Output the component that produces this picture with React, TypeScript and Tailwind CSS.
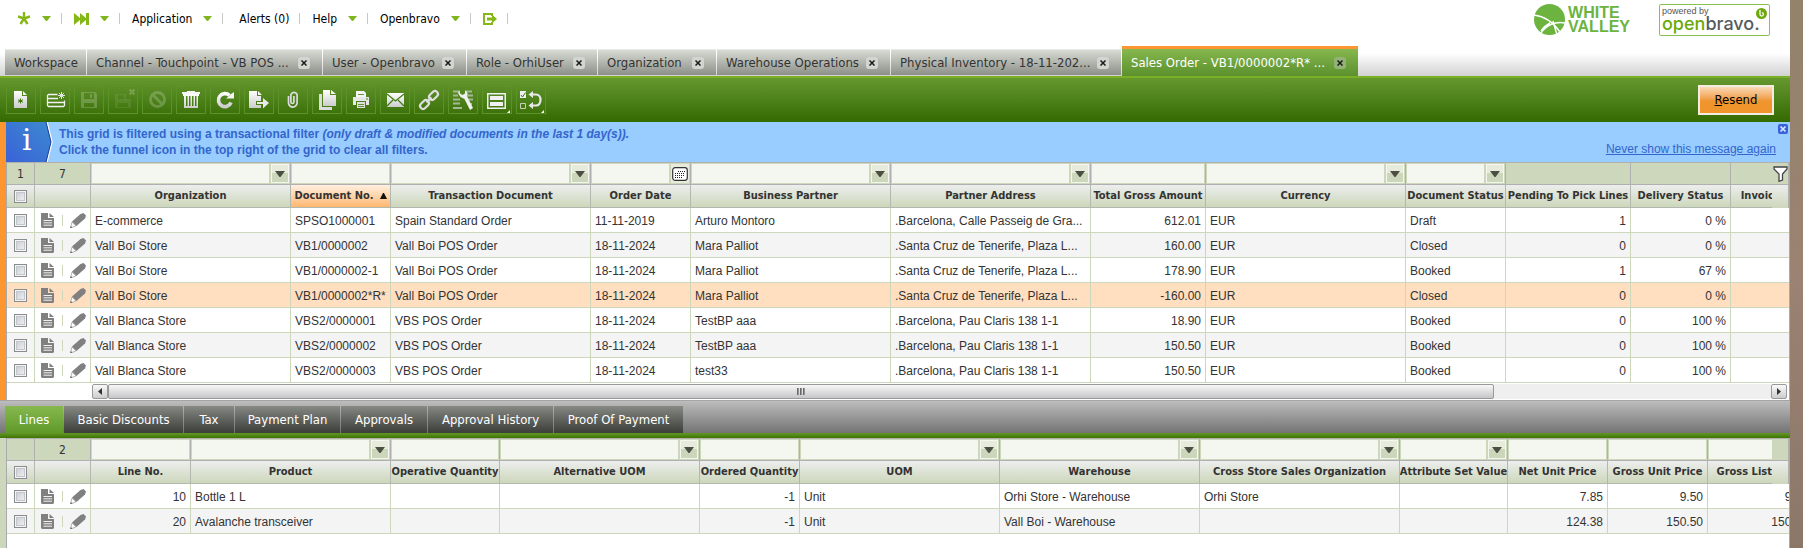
import React, { useState } from 'react';

interface Column {
  label: string;
  width: string;
  filter: 'text' | 'combo' | 'date' | 'none';
  align?: 'right';
  sorted?: boolean;
}

const menuFont = 'font-["DejaVu_Sans_Condensed","DejaVu_Sans",sans-serif]';

const openTabs = [
  { label: 'Workspace', width: 'w-[81px]' },
  { label: 'Channel - Touchpoint - VB POS ...', width: 'w-[235px]' },
  { label: 'User - Openbravo', width: 'w-[143px]' },
  { label: 'Role - OrhiUser', width: 'w-[130px]' },
  { label: 'Organization', width: 'w-[118px]' },
  { label: 'Warehouse Operations', width: 'w-[173px]' },
  { label: 'Physical Inventory - 18-11-202...', width: 'w-[230px]' },
  { label: 'Sales Order - VB1/0000002*R* ...', width: 'w-[236px]' },
];

const childTabs = [
  { label: 'Lines', width: 'w-[58px]' },
  { label: 'Basic Discounts', width: 'w-[119px]' },
  { label: 'Tax', width: 'w-[50px]' },
  { label: 'Payment Plan', width: 'w-[105px]' },
  { label: 'Approvals', width: 'w-[86px]' },
  { label: 'Approval History', width: 'w-[125px]' },
  { label: 'Proof Of Payment', width: 'w-[129px]' },
];

const orderColumns: Column[] = [
  { label: 'Organization', width: 'w-[200px]', filter: 'combo' },
  { label: 'Document No.', width: 'w-[100px]', filter: 'text', sorted: true },
  { label: 'Transaction Document', width: 'w-[200px]', filter: 'combo' },
  { label: 'Order Date', width: 'w-[100px]', filter: 'date' },
  { label: 'Business Partner', width: 'w-[200px]', filter: 'combo' },
  { label: 'Partner Address', width: 'w-[200px]', filter: 'combo' },
  { label: 'Total Gross Amount', width: 'w-[115px]', filter: 'text', align: 'right' },
  { label: 'Currency', width: 'w-[200px]', filter: 'combo' },
  { label: 'Document Status', width: 'w-[100px]', filter: 'combo' },
  { label: 'Pending To Pick Lines', width: 'w-[125px]', filter: 'none', align: 'right' },
  { label: 'Delivery Status', width: 'w-[100px]', filter: 'none', align: 'right' },
  { label: 'Invoice Status', width: 'w-[100px]', filter: 'none', align: 'right' },
];

const orderRows = [
  ['E-commerce', 'SPSO1000001', 'Spain Standard Order', '11-11-2019', 'Arturo Montoro', '.Barcelona, Calle Passeig de Gra...', '612.01', 'EUR', 'Draft', '1', '0 %', ''],
  ['Vall Boí Store', 'VB1/0000002', 'Vall Boi POS Order', '18-11-2024', 'Mara Palliot', '.Santa Cruz de Tenerife, Plaza L...', '160.00', 'EUR', 'Closed', '0', '0 %', ''],
  ['Vall Boí Store', 'VB1/0000002-1', 'Vall Boi POS Order', '18-11-2024', 'Mara Palliot', '.Santa Cruz de Tenerife, Plaza L...', '178.90', 'EUR', 'Booked', '1', '67 %', ''],
  ['Vall Boí Store', 'VB1/0000002*R*', 'Vall Boi POS Order', '18-11-2024', 'Mara Palliot', '.Santa Cruz de Tenerife, Plaza L...', '-160.00', 'EUR', 'Closed', '0', '0 %', ''],
  ['Vall Blanca Store', 'VBS2/0000001', 'VBS POS Order', '18-11-2024', 'TestBP aaa', '.Barcelona, Pau Claris 138 1-1', '18.90', 'EUR', 'Booked', '0', '100 %', ''],
  ['Vall Blanca Store', 'VBS2/0000002', 'VBS POS Order', '18-11-2024', 'TestBP aaa', '.Barcelona, Pau Claris 138 1-1', '150.50', 'EUR', 'Booked', '0', '100 %', ''],
  ['Vall Blanca Store', 'VBS2/0000003', 'VBS POS Order', '18-11-2024', 'test33', '.Barcelona, Pau Claris 138 1-1', '150.50', 'EUR', 'Booked', '0', '100 %', ''],
];

const lineColumns: Column[] = [
  { label: 'Line No.', width: 'w-[100px]', filter: 'text', align: 'right' },
  { label: 'Product', width: 'w-[200px]', filter: 'combo' },
  { label: 'Operative Quantity', width: 'w-[109px]', filter: 'text', align: 'right' },
  { label: 'Alternative UOM', width: 'w-[200px]', filter: 'combo' },
  { label: 'Ordered Quantity', width: 'w-[100px]', filter: 'text', align: 'right' },
  { label: 'UOM', width: 'w-[200px]', filter: 'combo' },
  { label: 'Warehouse', width: 'w-[200px]', filter: 'combo' },
  { label: 'Cross Store Sales Organization', width: 'w-[200px]', filter: 'combo' },
  { label: 'Attribute Set Value', width: 'w-[108px]', filter: 'combo' },
  { label: 'Net Unit Price', width: 'w-[100px]', filter: 'text', align: 'right' },
  { label: 'Gross Unit Price', width: 'w-[100px]', filter: 'text', align: 'right' },
  { label: 'Gross List Price', width: 'w-[105px]', filter: 'text', align: 'right' },
];

const lineRows = [
  ['10', 'Bottle 1 L', '', '', '-1', 'Unit', 'Orhi Store - Warehouse', 'Orhi Store', '', '7.85', '9.50', '9.50'],
  ['20', 'Avalanche transceiver', '', '', '-1', 'Unit', 'Vall Boi - Warehouse', '', '', '124.38', '150.50', '150.50'],
];

const docPath = 'M8 5h8v5h5v12H8z M17 5l4 4h-4z';

// Toolbar drawings, all on a 30x28 canvas
const toolbarItems: { name: string; disabled?: boolean; menu?: boolean; icon: React.ReactNode }[] = [
  {
    name: 'New in form',
    icon: (
      <>
        <path d={docPath} fill="url(#tool)" />
        <path d="M14.500 12.500v5M12 13.700l5 2.600M12 16.300l5-2.600" stroke="#3f7a10" strokeWidth="1" />
      </>
    ),
  },
  {
    name: 'New in grid',
    icon: (
      <>
        <path d="M17.500 8.500H8.500l-1 1v10l1 1h15l1-1v-5M8 12.500h10M8 16.500h16" fill="none" stroke="#f2f2f2" strokeWidth="1.300" />
        <path d="M21.500 6v7M18 9.500h7M19 7l5 5M24 7l-5 5" stroke="#e4e4e4" strokeWidth="1" />
      </>
    ),
  },
  {
    name: 'Save',
    disabled: true,
    icon: <path fillRule="evenodd" d="M7 6h14l2 2v14H7zM10 7v6h10V7zM16 8h2v4h-2zM10 17h10v4H10z" fill="#ffffff" />,
  },
  {
    name: 'Save and close',
    disabled: true,
    icon: (
      <>
        <path fillRule="evenodd" d="M7 8h11v5h5v9H7zM10 9v4h6V9zM10 17h10v4H10z" fill="#ffffff" opacity="0.400" />
        <path d="M21.500 3.500l5 5M26.500 3.500l-5 5" stroke="#ffffff" strokeWidth="2.200" />
      </>
    ),
  },
  {
    name: 'Undo changes',
    disabled: true,
    icon: (
      <>
        <circle cx="15.500" cy="13.500" r="7" fill="none" stroke="#ffffff" strokeWidth="3" />
        <path d="M10.500 8.500l10 10" stroke="#ffffff" strokeWidth="3" />
      </>
    ),
  },
  {
    name: 'Delete',
    icon: (
      <>
        <path d="M6 6h5V5h8v1h5v2H6z" fill="#f5f5f5" />
        <path fillRule="evenodd" d="M7 8h16v2h-1v12H8V10H7zM10 10h1.500v10H10zM13 10h1.500v10H13zM16 10h1.500v10H16zM19 10h1.500v10H19z" fill="url(#tool)" />
      </>
    ),
  },
  {
    name: 'Refresh',
    icon: (
      <>
        <path d="M21 16.500A6.500 6.500 0 1 1 19.500 9.500" fill="none" stroke="url(#tool)" strokeWidth="3.600" />
        <path d="M16 12.500l2.500-2L21 8l3-2v6.500z" fill="#f5f5f5" />
      </>
    ),
  },
  {
    name: 'Export to spreadsheet',
    icon: (
      <>
        <path d="M5 5h8v5h4v5h-5v4h5v3H5zM14 5l4 4h-4z" fill="url(#tool)" />
        <path d="M13 16h6v-4l6 5-6 5.500V18h-6z" fill="#e9e9e9" />
      </>
    ),
  },
  {
    name: 'Attachments',
    icon: (
      <path d="M10.500 10v6.500a4.300 4.300 0 0 0 8.600 .5V8.500a3.300 3.300 0 0 0-6.200 0v7.500a1.500 1.500 0 0 0 3 0V10" fill="none" stroke="#dddddd" strokeWidth="1.700" />
    ),
  },
  {
    name: 'Clone record',
    icon: (
      <>
        <path d="M7 8h3v13h10v3H7z" fill="#dcdcdc" />
        <path d="M11 4h7v5h6v11H11zM19 4l5 4h-5z" fill="url(#tool)" />
      </>
    ),
  },
  {
    name: 'Print',
    icon: (
      <>
        <path d="M10 5h8l2 2v4h-10z" fill="#f5f5f5" />
        <path fillRule="evenodd" d="M7 11h16v8h-3v-4H10v4H7zM20 12.500h2v1h-2z" fill="#e6e6e6" />
        <path d="M11 16h8v6h-8z" fill="#e0e0e0" />
        <path d="M12 18.500h6M12 20.500h6M12 8.500h6" stroke="#3f7a10" strokeWidth="0.800" />
      </>
    ),
  },
  {
    name: 'Send email',
    icon: (
      <>
        <path d="M7 7h17v14H7z" fill="url(#tool)" />
        <path d="M7 8l8.500 7L24 8M7 20l6-6M24 20l-6-6" fill="none" stroke="#3f7a10" strokeWidth="1.200" />
      </>
    ),
  },
  {
    name: 'Copy link',
    icon: (
      <g fill="none" stroke="#dedede" strokeWidth="2.200">
        <rect x="-5" y="-3" width="10" height="6" rx="3" transform="translate(19.500 9.500) rotate(-45)" />
        <rect x="-5" y="-3" width="10" height="6" rx="3" transform="translate(10.500 18.500) rotate(-45)" />
        <path d="M12.500 16.500l5-5" />
      </g>
    ),
  },
  {
    name: 'Linked items',
    icon: (
      <>
        <path d="M5 5.500h6M5 9.500h5M18 5.500h6M5 13.500h7M5 17.500h7M5 22h9M20 9.500h5M20 18h4M20 13.500h5" stroke="#a5b894" strokeWidth="1.800" />
        <path d="M11.500 4l.5 3.500 2.500 1.500L17 7.500V4l2.500 3v4L25 22l-3 2-5.500-11-4-2-2.500-4z" fill="#efefef" />
      </>
    ),
  },
  {
    name: 'Form layout',
    menu: true,
    icon: <path fillRule="evenodd" d="M5 7h19v16H5zM6.500 8.500v13h16v-13zM8 10h13v4H8zM8 16h13v4H8z" fill="#f0f0f0" />,
  },
  {
    name: 'Process',
    menu: true,
    icon: (
      <>
        <path d="M4 5h6v7H4z" fill="#f0f0f0" />
        <path d="M5 9l1.500 2L9.500 6.500" fill="none" stroke="#3f7a10" />
        <path d="M4.500 17.500h5v5h-5z" fill="none" stroke="#c5d0ba" />
        <path d="M16 8.500h4c6 0 6 11 0 11h-4" fill="none" stroke="#e8e8e8" strokeWidth="2.200" />
        <path d="M12.500 8.500l4.500-3.500v7zM12.500 19.500l4.500-3.500v7z" fill="#e8e8e8" />
      </>
    ),
  },
];

const Caret: React.FC = () => (
  <svg className="h-[5px] w-[9px]" viewBox="0 0 9 5">
    <path d="M0 0h9L5 5H4z" fill="#7fb41c" />
  </svg>
);

const Separator: React.FC = () => <span className="h-[11px] w-px bg-[#c8c8c8]" />;

const MenuItem: React.FC<{ label: string; caret?: boolean; children: React.ReactNode }> = ({ label, caret, children }) => (
  <>
    <button type="button" aria-label={label} className="flex items-center gap-[11px] pr-[10px] pl-3">
      {children}
      {caret && <Caret />}
    </button>
    <Separator />
  </>
);

const CloseButton: React.FC<{ label: string; active?: boolean }> = ({ label, active }) => (
  <button
    type="button"
    aria-label={`Close ${label}`}
    className={`flex h-3 w-3 shrink-0 items-center justify-center rounded-[3px] ${active ? 'bg-[#93b376]' : 'bg-[#d3d5d0]'}`}
  >
    <svg className="h-[6px] w-[6px]" viewBox="0 0 6 6">
      <path d="M.5 .5l5 5M5.500 .5l-5 5" stroke="#1a1a1a" strokeWidth="1.500" />
    </svg>
  </button>
);

const Checkbox: React.FC<{ label: string }> = ({ label }) => (
  <input
    type="checkbox"
    aria-label={label}
    className="block h-[13px] w-[13px] appearance-none border border-[#8a8d90] bg-linear-to-br from-[#c4c8d0] to-[#f6f6f6] shadow-[inset_0_0_0_1px_#f4f4f4,inset_0_0_0_2px_#c3c6ca] checked:bg-[#7fb41c]"
  />
);

const FilterCell: React.FC<{ column: Column }> = ({ column }) => {
  if (column.filter === 'none') {
    return null;
  }
  return (
    <div className="flex h-full gap-[2px] p-px">
      <input type="text" aria-label={`Filter ${column.label}`} className="h-full w-0 min-w-0 flex-1 bg-[#f4f7ef] px-1 outline-none" />
      {column.filter === 'combo' && (
        <button
          type="button"
          aria-label={`Pick ${column.label}`}
          className="flex w-[18px] items-center justify-center border border-[#f4f7ef] bg-linear-to-b from-[#e6ebdc] from-50% to-[#ccd6ba] to-50%"
        >
          <svg className="h-[6px] w-[10px]" viewBox="0 0 10 6">
            <path d="M0 0h10L5.500 6h-1z" fill="#4a4f42" />
          </svg>
        </button>
      )}
      {column.filter === 'date' && (
        <button type="button" aria-label={`Pick ${column.label}`} className="flex w-[18px] items-center justify-center bg-[#e6ebdc]">
          <svg className="h-[14px] w-4" viewBox="0 0 16 14">
            <rect x=".7" y=".7" width="14.600" height="12.600" rx="2.500" fill="#ffffff" stroke="#333333" strokeWidth="1.200" />
            <path d="M6 4.500h7M3 6.500h10M3 8.500h10M3 10.500h8" stroke="#222222" strokeDasharray="1 1" />
          </svg>
        </button>
      )}
    </div>
  );
};

interface GridProps {
  columns: Column[];
  rows: string[][];
  selected?: number;
  counter?: string;
  funnel?: boolean;
  minWidth: string;
}

const Grid: React.FC<GridProps> = ({ columns, rows, selected, counter, funnel, minWidth }) => {
  const [current, setCurrent] = useState<number | undefined>(selected);

  return (
    <div className="relative overflow-hidden">
      <table className={`table-fixed border-separate border-spacing-0 font-["Liberation_Sans",Arial,sans-serif] text-xs text-[#333333] ${minWidth}`}>
        <colgroup>
          <col className="w-[28px]" />
          <col className="w-[56px]" />
          {columns.map((column) => (
            <col key={column.label} className={column.width} />
          ))}
        </colgroup>
        <thead>
          <tr className="bg-[#cdd7bb]">
            <td className={`h-[23px] border-t border-r border-b border-[#b0b0b0] p-0 pt-px text-center ${menuFont}`}>{counter}</td>
            <td className={`border-t border-r border-b border-[#b0b0b0] p-0 pt-px text-center ${menuFont}`}>{rows.length}</td>
            {columns.map((column) => (
              <td key={column.label} className="h-[23px] border-t border-r border-b border-[#b0b0b0] p-0">
                <FilterCell column={column} />
              </td>
            ))}
          </tr>
          <tr>
            <td className="h-[23px] border-r border-b border-[#b0b8b0] bg-linear-to-b from-[#eceeed] to-[#cdd7bb] p-0 pl-[7px]">
              <Checkbox label="Select all" />
            </td>
            <td className="border-r border-b border-[#b0b8b0] bg-linear-to-b from-[#eceeed] to-[#cdd7bb] p-0" />
            {columns.map((column) => (
              <th
                key={column.label}
                scope="col"
                className={`h-[23px] overflow-hidden border-r border-b border-[#b0b8b0] bg-linear-to-b p-0 text-center text-[11px] font-bold whitespace-nowrap ${menuFont} ${
                  column.sorted ? 'from-[#ffefe0] to-[#ffb76e]' : 'from-[#eceeed] to-[#cdd7bb]'
                }`}
              >
                <div className="flex items-center justify-center gap-[6px]">
                  {column.label}
                  {column.sorted && (
                    <svg className="h-[6px] w-[7px]" viewBox="0 0 7 6">
                      <path d="M0 6L3 0h1l3 6z" fill="#111111" />
                    </svg>
                  )}
                </div>
              </th>
            ))}
          </tr>
        </thead>
        <tbody>
          {rows.map((row, index) => (
            <tr
              key={index}
              onClick={() => setCurrent(index)}
              className={current === index ? 'bg-[#ffdfbf]' : index % 2 ? 'bg-[#f4f4f4]' : 'bg-white'}
            >
              <td className="h-[25px] border-r border-b border-[#cdd7bb] p-0 pt-px pl-[7px]">
                <Checkbox label={`Select row ${index + 1}`} />
              </td>
              <td className="border-r border-b border-[#cdd7bb] p-0 pt-px">
                <div className="flex items-center justify-between pr-1 pl-[6px]">
                  <button type="button" aria-label="Open in form">
                    <svg className="h-[15px] w-[13px]" viewBox="0 0 13 15">
                      <path d="M0 0h7v5h6v9l-1 1H1l-1-1zM8.500 0L13 4H8.500z" fill="#808080" />
                      <path d="M2.500 7.500h8.500M2.500 9.800h8.500M2.500 12.200h8.500" stroke="#f0f0f0" strokeWidth="1" />
                    </svg>
                  </button>
                  <span className="h-[11px] w-px bg-[#cdd7bb]" />
                  <button type="button" aria-label="Edit in grid">
                    <svg className="h-[15px] w-4" viewBox="0 0 16 15">
                      <path d="M2 8.500L10.500 1l3-1L16 2.500l-1 3L6.500 13z" fill="#808080" />
                      <path d="M2 9l4 4-5.500 2z" fill="#fafafa" stroke="#9a9a9a" strokeWidth="0.700" />
                      <path d="M.8 13l1.500 1.500L.3 15z" fill="#555555" />
                    </svg>
                  </button>
                </div>
              </td>
              {row.map((value, i) => (
                <td
                  key={i}
                  className={`overflow-hidden border-r border-b border-[#cdd7bb] px-1 pt-px pb-0 whitespace-nowrap ${
                    columns[i].align === 'right' ? 'text-right' : ''
                  }`}
                >
                  {value}
                </td>
              ))}
            </tr>
          ))}
        </tbody>
      </table>
      {/* Corner over the header, above the vertical scroll area */}
      <div className="absolute top-0 right-0 flex h-[46px] w-[17px] flex-col border-t border-r border-[#b0b0b0]">
        <div className="flex h-[22px] items-center justify-center border-b border-[#b0b0b0] bg-[#cdd7bb]">
          {funnel && (
            <button type="button" aria-label="Clear filters">
              <svg className="h-4 w-[15px]" viewBox="0 0 15 16">
                <path d="M1 1h13v2L9.500 8v6l-3.500 1.300V8L1 3z" fill="#ffffff" stroke="#444444" strokeWidth="1.300" />
              </svg>
            </button>
          )}
        </div>
        <div className="flex-1 bg-linear-to-b from-[#eceeed] to-[#cdd7bb]" />
      </div>
    </div>
  );
};

const App: React.FC = () => {
  const [activeChild, setActiveChild] = useState('Lines');
  const [showMessage, setShowMessage] = useState(true);

  return (
    <div className="flex min-h-screen bg-linear-to-b from-[#92836a] via-[#9b8272] to-[#8b7768]">
      <svg className="absolute h-0 w-0" aria-hidden="true">
        <defs>
          <linearGradient id="tool" x1="0" y1="0" x2="0" y2="1">
            <stop offset="0" stopColor="#ffffff" />
            <stop offset="1" stopColor="#cccccc" />
          </linearGradient>
        </defs>
      </svg>

      <div className="mr-[13px] flex min-w-0 flex-1 flex-col bg-white">
        {/* Top menu */}
        <header className="flex h-[76px] flex-col justify-between bg-linear-to-b from-white from-70% to-[#d2d2d2]">
          <div className="flex justify-between pr-5">
            <nav className={`flex h-[37px] items-center pl-[5px] text-xs text-black ${menuFont}`}>
              <MenuItem label="Create new" caret>
                <svg className="h-[13px] w-[14px]" viewBox="0 0 13 13">
                  <path d="M6.500 6.500V0M6.500 6.500L.5 4.500M6.500 6.500l6-2M6.500 6.500L3 12M6.500 6.500L10 12" stroke="#85b817" strokeWidth="2.400" />
                </svg>
              </MenuItem>
              <MenuItem label="Quick launch" caret>
                <svg className="h-3 w-[15px]" viewBox="0 0 15 12">
                  <path d="M0 0l6 5V0l6 5V0h3v12h-3V7l-6 5V7l-6 5z" fill="#85b817" />
                </svg>
              </MenuItem>
              <MenuItem label="Application" caret>Application</MenuItem>
              <span className="w-1" />
              <MenuItem label="Alerts (0)">Alerts (0)</MenuItem>
              <MenuItem label="Help" caret>Help</MenuItem>
              <MenuItem label="Openbravo" caret>Openbravo</MenuItem>
              <MenuItem label="Log out">
                <svg className="h-3 w-[14px]" viewBox="0 0 14 12">
                  <path d="M9 1H1v10h8V9M9 3V0" fill="none" stroke="#85b817" strokeWidth="2" />
                  <path d="M4 4.500h5V1.500L14 6l-5 4.500v-3H4z" fill="#85b817" />
                </svg>
              </MenuItem>
            </nav>
            <div className="flex gap-[29px] pt-1">
              <div className="flex items-start gap-[3px]">
                <svg className="h-[31px] w-[31px]" viewBox="0 0 31 31">
                  <circle cx="15.500" cy="15.500" r="15.500" fill="#6cb33f" />
                  <path d="M0 11c9 1 19 7 26 17M31 19c-9-2-19 2-24 10M16 19c-4 2-7 5-9 8M19 17l4 14" fill="none" stroke="#ffffff" strokeWidth="1.400" />
                </svg>
                <div className="pt-[2px] font-['Liberation_Sans',Arial,sans-serif] text-base leading-[14px] font-bold text-[#6cb33f]">
                  <div>WHITE</div>
                  <div>VALLEY</div>
                </div>
              </div>
              <a href="#openbravo" className="relative block h-8 w-[111px] rounded-[2px] border border-[#8cc152] pl-[2px]">
                <span className="block pt-px font-['Liberation_Sans',Arial,sans-serif] text-[9px] leading-[10px] text-[#555555]">powered by</span>
                <span className="block font-['Inter','Liberation_Sans',sans-serif] text-lg leading-[16px] font-medium text-[#555b5e]">
                  <span className="text-[#6da90b]">open</span>bravo.
                </span>
                <svg className="absolute top-[3px] right-[2px] h-[11px] w-[11px]" viewBox="0 0 11 11">
                  <circle cx="5.500" cy="5.500" r="5.500" fill="#6da90b" />
                  <path d="M4 2v4.500a1.700 1.700 0 1 0 2-1.800" fill="none" stroke="#ffffff" strokeWidth="1.300" />
                </svg>
              </a>
            </div>
          </div>

          <div className={`flex items-end gap-px pl-[5px] text-[13px] ${menuFont}`}>
            {openTabs.map((tab, index) => {
              const active = index === openTabs.length - 1;
              return (
                <div
                  key={tab.label}
                  className={`flex shrink-0 items-center justify-between bg-linear-to-b pr-3 pl-[9px] ${tab.width} ${
                    active
                      ? 'h-[30px] border-t-[3px] border-[#fb9631] from-[#86b84e] to-[#5c902d] text-white'
                      : 'mb-px h-[26px] border-t border-[#e8eae5] from-[#d9dcd4] to-[#8d9089] text-[#333333]'
                  }`}
                >
                  <button type="button" className="whitespace-nowrap">{tab.label}</button>
                  {index > 0 && <CloseButton label={tab.label} active={active} />}
                </div>
              );
            })}
          </div>
        </header>

        {/* Toolbar */}
        <div className="flex h-[46px] items-center justify-between border-t-2 border-[#7bb026] bg-linear-to-b from-[#65982d] to-[#346a00] pr-4 pl-[6px]">
          <div className="flex gap-1">
            {toolbarItems.map((item) => (
              <button
                key={item.name}
                type="button"
                aria-label={item.name}
                disabled={item.disabled}
                className="relative h-7 w-[30px] border border-[#5c9326]"
              >
                <svg className={`-m-px h-7 w-[30px] max-w-none ${item.disabled ? 'opacity-20' : ''}`} viewBox="0 0 30 28">
                  {item.icon}
                  {item.menu && <path d="M28 24v3h-3z" fill="#ffffff" />}
                </svg>
              </button>
            ))}
          </div>
          <button
            type="button"
            className={`h-[30px] w-[76px] border-2 border-[#f3ece0] bg-linear-to-b from-[#f9d9b4] to-[#f0942c] to-55% text-[13px] text-black ${menuFont}`}
          >
            <span className="underline">R</span>esend
          </button>
        </div>

        {/* Orders grid */}
        <main className="flex flex-col border-l-[6px] border-[#fb9631]">
          {showMessage && (
            <div className="flex h-10 justify-between bg-[#99ccff] font-['Liberation_Sans',Arial,sans-serif] text-xs text-[#3366cc]">
              <div className="flex">
                <svg className="h-10 w-[53px]" viewBox="0 0 53 40">
                  <defs>
                    <linearGradient id="info" x1="0" y1="1" x2="1" y2="0">
                      <stop offset="0" stopColor="#3a62d8" />
                      <stop offset="1" stopColor="#3c8ad0" />
                    </linearGradient>
                  </defs>
                  <path d="M0 0h41l5 20-5 20H0z" fill="url(#info)" />
                  <path d="M41 0l5 20-5 20" fill="none" stroke="#ffffff" strokeWidth="1.500" />
                  <path d="M40 0l5 20-5 20" fill="none" stroke="#1f3f9c" />
                  <text x="16" y="28" fill="#ffffff" fontSize="30" fontFamily="DejaVu Serif, serif">i</text>
                </svg>
                <div className="pt-1 leading-4 font-bold">
                  <div>
                    This grid is filtered using a transactional filter <i>(only draft &amp; modified documents in the last 1 day(s)).</i>
                  </div>
                  <div>Click the funnel icon in the top right of the grid to clear all filters.</div>
                </div>
              </div>
              <div className="flex items-start gap-[2px] pt-[2px] pr-[2px]">
                <a href="#never" className="pt-[17px] leading-4 underline">Never show this message again</a>
                <button type="button" aria-label="Close message" onClick={() => setShowMessage(false)}>
                  <svg className="h-[10px] w-[10px]" viewBox="0 0 10 10">
                    <rect width="10" height="10" rx="2" fill="#3a62d8" />
                    <path d="M2.500 2.500l5 5M7.500 2.500l-5 5" stroke="#d5e6ff" strokeWidth="1.700" />
                  </svg>
                </button>
              </div>
            </div>
          )}
          <div className="border-x border-[#aaaaaa]">
            <Grid columns={orderColumns} rows={orderRows} selected={3} counter="1" funnel minWidth="w-full min-w-[1824px]" />
            <div className="flex h-[17px] items-center pr-[2px] pl-[85px]">
              <button type="button" aria-label="Scroll left" className="flex h-[15px] w-4 items-center justify-center rounded-[2px] border border-[#999999] bg-linear-to-b from-[#fafafa] to-[#cccccc]">
                <svg className="h-[7px] w-1" viewBox="0 0 4 7"><path d="M4 0v7L0 3.500z" fill="#333333" /></svg>
              </button>
              <div className="h-[15px] flex-1 bg-[#efefef]">
                <div className="flex h-full w-5/6 items-center justify-center gap-px rounded-[2px] border border-[#999999] bg-linear-to-b from-[#f8f8f8] to-[#c6c6c8]">
                  <span className="h-[7px] w-[2px] bg-linear-to-r from-[#555555] to-[#aaaaaa]" />
                  <span className="h-[7px] w-[2px] bg-linear-to-r from-[#555555] to-[#aaaaaa]" />
                  <span className="h-[7px] w-[2px] bg-linear-to-r from-[#555555] to-[#aaaaaa]" />
                </div>
              </div>
              <button type="button" aria-label="Scroll right" className="flex h-[15px] w-4 items-center justify-center rounded-[2px] border border-[#999999] bg-linear-to-b from-[#fafafa] to-[#cccccc]">
                <svg className="h-[7px] w-1" viewBox="0 0 4 7"><path d="M0 0v7l4-3.500z" fill="#333333" /></svg>
              </button>
            </div>
          </div>
        </main>

        {/* Child tabs */}
        <div className={`flex h-[33px] items-end gap-px border-t border-[#a5a5a5] bg-linear-to-b from-[#bdbdbd] to-[#747474] pl-[5px] text-[13px] text-white ${menuFont}`}>
          {childTabs.map((tab) => (
            <button
              key={tab.label}
              type="button"
              onClick={() => setActiveChild(tab.label)}
              className={`h-[27px] bg-linear-to-b text-center whitespace-nowrap ${tab.width} ${
                activeChild === tab.label ? 'from-[#86b84e] to-[#5f9a2a]' : 'from-[#878985] to-[#3c3e3a]'
              }`}
            >
              {tab.label}
            </button>
          ))}
        </div>
        <div className="h-[5px] bg-linear-to-b from-[#629826] to-[#3f7400]" />

        {/* Lines grid */}
        <section className="flex-1 border-l-[6px] border-[#cdd7bb]">
          <div className="h-full border-x border-[#aaaaaa]">
            <Grid columns={lineColumns} rows={lineRows} minWidth="w-full min-w-[1806px]" />
          </div>
        </section>
      </div>
    </div>
  );
};

export default App;
